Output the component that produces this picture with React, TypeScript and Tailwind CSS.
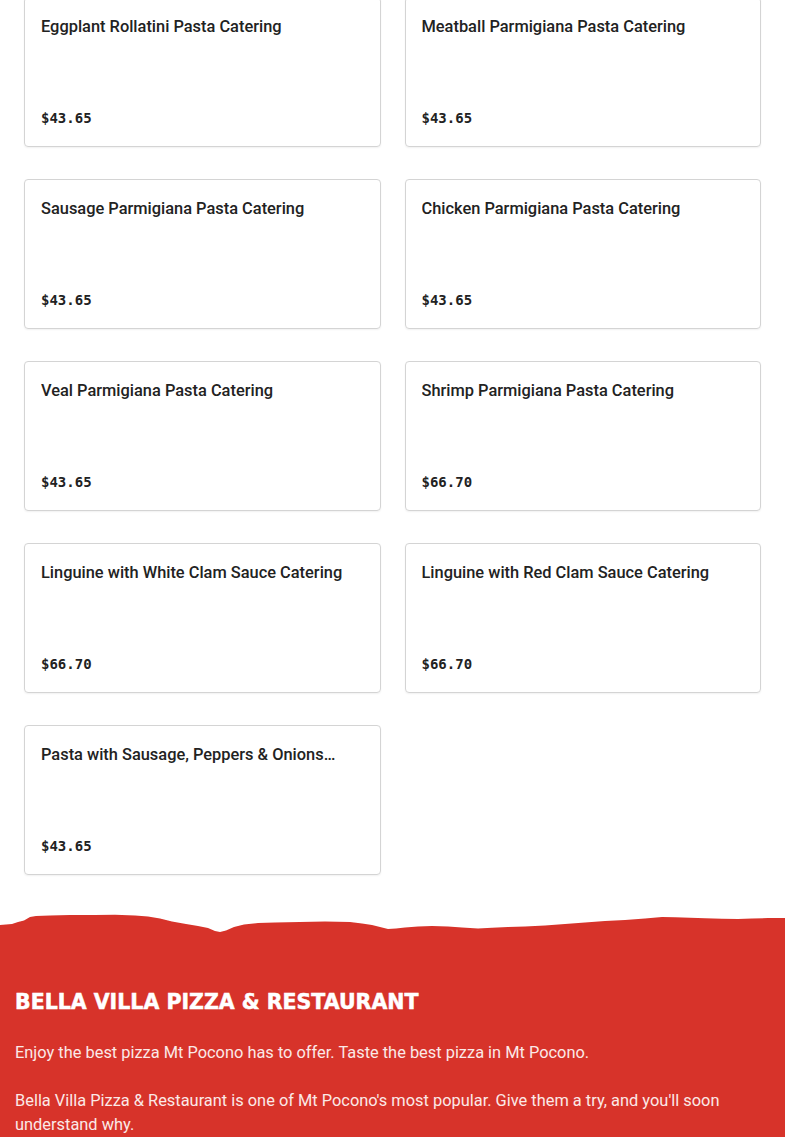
const items = [
  { name: "Eggplant Rollatini Pasta Catering", price: "$43.65" },
  { name: "Meatball Parmigiana Pasta Catering", price: "$43.65" },
  { name: "Sausage Parmigiana Pasta Catering", price: "$43.65" },
  { name: "Chicken Parmigiana Pasta Catering", price: "$43.65" },
  { name: "Veal Parmigiana Pasta Catering", price: "$43.65" },
  { name: "Shrimp Parmigiana Pasta Catering", price: "$66.70" },
  { name: "Linguine with White Clam Sauce Catering", price: "$66.70" },
  { name: "Linguine with Red Clam Sauce Catering", price: "$66.70" },
  { name: "Pasta with Sausage, Peppers & Onions Catering", price: "$43.65" },
]

function TornEdge() {
  // rough torn paper top edge
  const d =
    "M0 13 L6 12.5 L12 12 L18 10 L24 8.5 L30 5 L36 4 L50 3.5 L70 3 L95 3 L115 2.8 L135 3.5 L148 4.5 L160 6.5 L172 9.5 L186 12 L198 14 L208 16 L215 19 L220 20 L226 18.5 L234 15 L244 12.5 L258 11 L275 10.5 L300 10 L325 9.5 L350 10 L362 11.5 L372 13 L380 15 L388 17 L396 16.5 L405 15.5 L418 14.5 L432 14 L448 14.5 L462 15.5 L478 16.5 L492 15.8 L508 15 L525 14.5 L545 13.5 L565 12 L585 10.5 L605 9 L625 8 L645 6.5 L662 5 L675 5.2 L690 5.8 L705 6.2 L722 6.8 L738 7 L752 6.5 L768 6 L785 6 L785 24 L0 24 Z"
  return (
    <svg viewBox="0 0 785 24" preserveAspectRatio="none" className="block w-full h-[24px]">
      <path d={d} fill="#d7332a" />
    </svg>
  )
}

export default function App() {
  return (
    <div className="bg-white min-h-screen" style={{ fontFamily: "Roboto, 'Liberation Sans', sans-serif" }}>
      {/* cards */}
      <div className="grid grid-cols-2 gap-x-6 gap-y-8 px-6 -mt-[3px]">
        {items.map((it) => (
          <div
            key={it.name}
            className="h-[150px] flex flex-col justify-between border border-[#d4d4d4] rounded-[4px] shadow-[0_1px_2px_rgba(0,0,0,0.06)] px-4 pt-[17px] pb-[18px]"
          >
            <h3 className="text-[16.4px] leading-6 font-medium text-[#222] line-clamp-1 break-words">{it.name}</h3>
            <span className="text-[14px] leading-5 font-bold text-[#222] font-['DejaVu_Sans_Mono',monospace]">
              {it.price}
            </span>
          </div>
        ))}
      </div>

      {/* footer */}
      <footer className="mt-[37px]">
        <TornEdge />
        <div className="bg-[#d7332a] px-[15px] pt-[52px] pb-10 text-white">
          <h2 className="text-[20.5px] leading-7 font-bold font-['DejaVu_Sans',sans-serif] [-webkit-text-stroke:0.5px_white] mb-[25px]">
            BELLA VILLA PIZZA &amp; RESTAURANT
          </h2>
          <p className="text-[16.4px] leading-6 text-[#fbe9e7]">
            Enjoy the best pizza Mt Pocono has to offer. Taste the best pizza in Mt Pocono.
          </p>
          <p className="mt-6 text-[16.4px] leading-6 text-[#fbe9e7]">
            Bella Villa Pizza &amp; Restaurant is one of Mt Pocono's most popular. Give them a try, and you'll soon
            understand why.
          </p>
        </div>
      </footer>
    </div>
  )
}
